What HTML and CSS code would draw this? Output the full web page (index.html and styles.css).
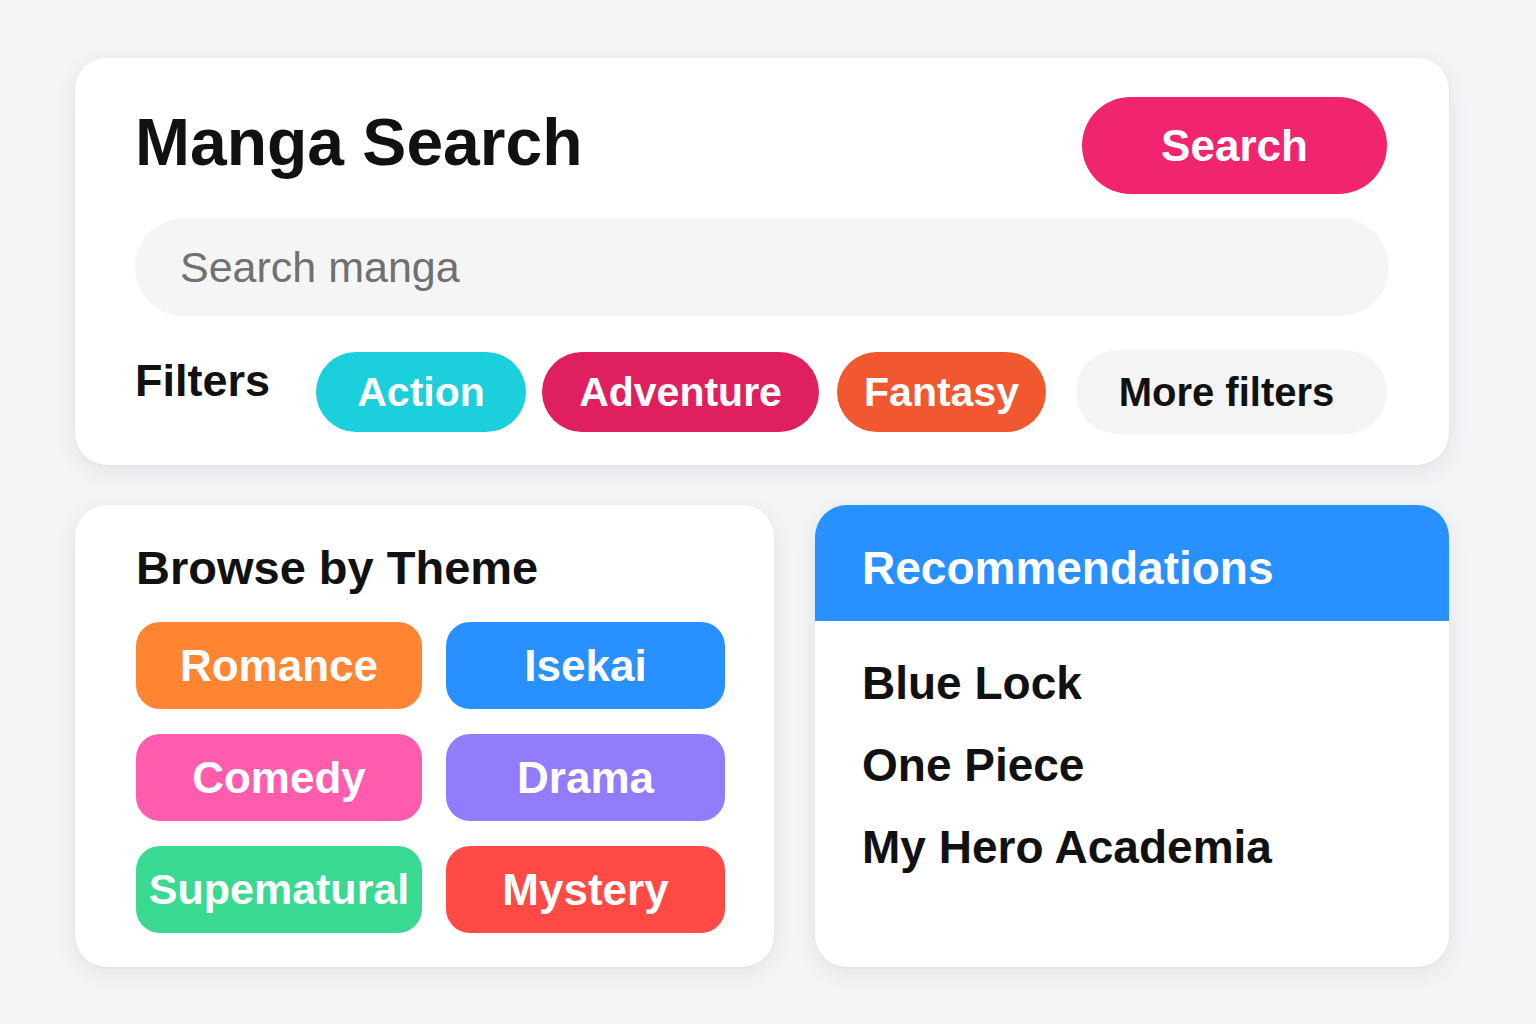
FILE: index.html
```html
<!DOCTYPE html>
<html lang="en">
<head>
<meta charset="utf-8">
<title>Manga Search</title>
<link rel="stylesheet" href="styles.css">
</head>
<body>
<main class="page">
  <section class="card search-card">
    <div class="search-head">
      <h1 class="title">Manga Search</h1>
      <button class="search-btn">Search</button>
    </div>
    <div class="search-input">Search manga</div>
    <div class="filters">
      <span class="filters-label">Filters</span>
      <span class="chip chip-action">Action</span>
      <span class="chip chip-adventure">Adventure</span>
      <span class="chip chip-fantasy">Fantasy</span>
      <span class="chip chip-more">More filters</span>
    </div>
  </section>

  <div class="bottom-row">
    <section class="card theme-card">
      <h2 class="section-title">Browse by Theme</h2>
      <div class="theme-grid">
        <div class="theme theme-romance">Romance</div>
        <div class="theme theme-isekai">Isekai</div>
        <div class="theme theme-comedy">Comedy</div>
        <div class="theme theme-drama">Drama</div>
        <div class="theme theme-super">Supematural</div>
        <div class="theme theme-mystery">Mystery</div>
      </div>
    </section>

    <section class="card rec-card">
      <div class="rec-head">Recommendations</div>
      <ul class="rec-list">
        <li>Blue Lock</li>
        <li>One Piece</li>
        <li>My Hero Academia</li>
      </ul>
    </section>
  </div>
</main>
</body>
</html>
```

FILE: styles.css
```css
* { box-sizing: border-box; }

html, body {
  margin: 0;
  padding: 0;
}

body {
  background: #f3f4f6;
  font-family: "Liberation Sans", Arial, sans-serif;
  color: #111;
  width: 1536px;
  height: 1024px;
  overflow: hidden;
}

.page {
  padding: 58px 87px 0 75px;
  display: flex;
  flex-direction: column;
  gap: 40px;
}

.card {
  background: #ffffff;
  border-radius: 32px;
  box-shadow: 0 6px 22px rgba(20, 24, 40, 0.07), 0 1px 3px rgba(20, 24, 40, 0.04);
}

/* Top search card */
.search-card {
  width: 1374px;
  height: 407px;
  padding: 39px 60px 0 60px;
  display: flex;
  flex-direction: column;
}

.search-head {
  display: flex;
  align-items: center;
  justify-content: space-between;
  padding-right: 2px;
}

.title {
  margin: 0;
  font-size: 66px;
  font-weight: 700;
  line-height: 1;
  color: #111;
  margin-top: -8px;
}

.search-btn {
  width: 305px;
  height: 97px;
  border: none;
  border-radius: 49px;
  background: #f0246f;
  color: #fff;
  font-family: "Liberation Sans", Arial, sans-serif;
  font-weight: 700;
  font-size: 44px;
  padding: 0;
}

.search-input {
  margin-top: 24px;
  height: 98px;
  border-radius: 49px;
  background: #f5f5f6;
  display: flex;
  align-items: center;
  padding-left: 45px;
  font-size: 43px;
  color: #707070;
}

.filters {
  margin-top: 34px;
  display: flex;
  align-items: center;
  height: 84px;
}

.filters-label {
  font-size: 45px;
  font-weight: 700;
  color: #111;
  margin-top: -22px;
  margin-right: 46px;
}

.chip {
  height: 80px;
  border-radius: 40px;
  display: flex;
  align-items: center;
  justify-content: center;
  font-size: 41px;
  font-weight: 700;
  color: #fff;
}

.chip-action { width: 210px; background: #1bcfdc; margin-right: 16px; }
.chip-adventure { width: 277px; background: #e01f5e; margin-right: 18px; }
.chip-fantasy { width: 209px; background: #f2582f; }
.chip-more {
  margin-left: auto;
  width: 311px;
  height: 84px;
  border-radius: 42px;
  background: #f4f4f5;
  color: #111;
  font-size: 40px;
  padding-right: 10px;
  margin-right: 2px;
}

/* Bottom row */
.bottom-row {
  display: flex;
  gap: 41px;
}

.theme-card {
  width: 699px;
  height: 462px;
  padding: 39px 0 0 61px;
}

.section-title {
  margin: 0;
  font-size: 47px;
  font-weight: 700;
  line-height: 1;
  color: #111;
}

.theme-grid {
  margin-top: 31px;
  display: grid;
  grid-template-columns: 286px 279px;
  grid-auto-rows: 87px;
  column-gap: 24px;
  row-gap: 25px;
}

.theme {
  border-radius: 24px;
  display: flex;
  align-items: center;
  justify-content: center;
  color: #fff;
  font-size: 44px;
  font-weight: 700;
  white-space: nowrap;
}

.theme-romance { background: #ff8532; }
.theme-isekai { background: #2990ff; }
.theme-comedy { background: #ff5cae; }
.theme-drama { background: #937cfb; }
.theme-super { background: #3ad992; font-size: 43px; }
.theme-mystery { background: #ff4a45; }

.rec-card {
  width: 634px;
  height: 462px;
  overflow: hidden;
}

.rec-head {
  background: #2990ff;
  color: #fff;
  font-size: 46px;
  font-weight: 700;
  line-height: 1;
  padding: 40px 0 30px 47px;
  height: 116px;
}

.rec-list {
  list-style: none;
  margin: 0;
  padding: 21px 0 0 47px;
}

.rec-list li {
  font-size: 46px;
  font-weight: 700;
  line-height: 82px;
  color: #111;
}
```
